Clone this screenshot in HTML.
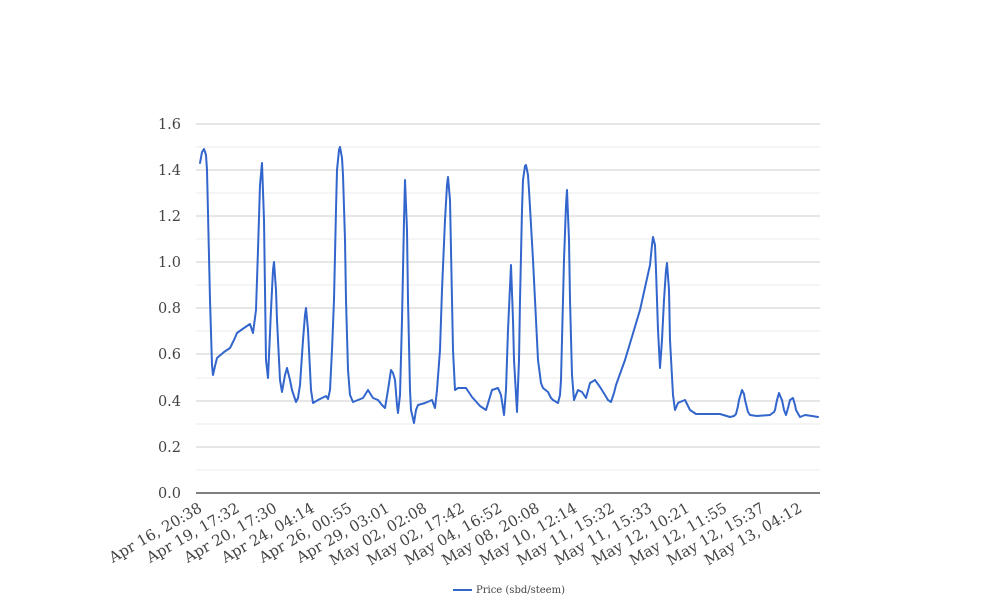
<!DOCTYPE html>
<html><head><meta charset="utf-8"><style>
html,body{margin:0;padding:0;background:#fff;width:1008px;height:616px;overflow:hidden}
svg text{font-family:"DejaVu Serif","Liberation Serif",serif;fill:#444}
</style></head><body>
<svg width="1008" height="616" viewBox="0 0 1008 616" xmlns="http://www.w3.org/2000/svg">
<g stroke="#ebebeb" stroke-width="1">
<line x1="196" y1="147" x2="820" y2="147"/><line x1="196" y1="193" x2="820" y2="193"/>
<line x1="196" y1="239" x2="820" y2="239"/><line x1="196" y1="285" x2="820" y2="285"/>
<line x1="196" y1="331" x2="820" y2="331"/><line x1="196" y1="378" x2="820" y2="378"/>
<line x1="196" y1="424" x2="820" y2="424"/><line x1="196" y1="470" x2="820" y2="470"/>
</g>
<g stroke="#cccccc" stroke-width="1">
<line x1="196" y1="124" x2="820" y2="124"/><line x1="196" y1="170" x2="820" y2="170"/>
<line x1="196" y1="216" x2="820" y2="216"/><line x1="196" y1="262" x2="820" y2="262"/>
<line x1="196" y1="308" x2="820" y2="308"/><line x1="196" y1="354" x2="820" y2="354"/>
<line x1="196" y1="401" x2="820" y2="401"/><line x1="196" y1="447" x2="820" y2="447"/>
</g>
<line x1="196" y1="493" x2="820" y2="493" stroke="#333" stroke-width="1.2"/>
<g font-size="14.5" text-anchor="end">
<text x="181" y="129">1.6</text><text x="181" y="175">1.4</text><text x="181" y="221">1.2</text>
<text x="181" y="267">1.0</text><text x="181" y="313">0.8</text><text x="181" y="359">0.6</text>
<text x="181" y="406">0.4</text><text x="181" y="452">0.2</text><text x="181" y="498">0.0</text>
</g>
<g font-size="15" text-anchor="end">
<text transform="translate(203,511) rotate(-30)">Apr 16, 20:38</text>
<text transform="translate(240.5,511) rotate(-30)">Apr 19, 17:32</text>
<text transform="translate(278,511) rotate(-30)">Apr 20, 17:30</text>
<text transform="translate(315.5,511) rotate(-30)">Apr 24, 04:14</text>
<text transform="translate(353,511) rotate(-30)">Apr 26, 00:55</text>
<text transform="translate(390.5,511) rotate(-30)">Apr 29, 03:01</text>
<text transform="translate(428,511) rotate(-30)">May 02, 02:08</text>
<text transform="translate(465.5,511) rotate(-30)">May 02, 17:42</text>
<text transform="translate(503,511) rotate(-30)">May 04, 16:52</text>
<text transform="translate(540.5,511) rotate(-30)">May 08, 20:08</text>
<text transform="translate(578,511) rotate(-30)">May 10, 12:14</text>
<text transform="translate(615.5,511) rotate(-30)">May 11, 15:32</text>
<text transform="translate(653,511) rotate(-30)">May 11, 15:33</text>
<text transform="translate(690.5,511) rotate(-30)">May 12, 10:21</text>
<text transform="translate(728,511) rotate(-30)">May 12, 11:55</text>
<text transform="translate(765.5,511) rotate(-30)">May 12, 15:37</text>
<text transform="translate(803,511) rotate(-30)">May 13, 04:12</text>
</g>
<polyline fill="none" stroke="#3366cc" stroke-width="2" stroke-linejoin="round" stroke-linecap="round" points="200,163 202,152 204,149 206,155 207,170 210,300 212,365 213,375 215,366 217,358 224,352 230,348 234,340 237,333 244,328 250,324 253,333 256,310 258,250 260,185 262,163 264,220 266,360 268,378 271,310 273,270 274,262 276,290 277,320 280,380 282,392 285,375 287,368 290,380 292,390 296,402 298,398 300,385 303,340 305,315 306,308 308,330 309,350 311,390 313,403 318,400 322,398 326,396 328,399 330,390 332,350 334,300 336,210 337,170 339,150 340,147 342,158 343,175 345,240 346,300 348,370 350,395 353,402 358,400 363,398 368,390 373,398 378,400 382,405 385,408 388,390 391,370 393,373 395,380 397,405 398,413 400,395 402,320 404,220 405,180 407,230 408,300 410,390 411,410 414,423 416,410 418,405 425,403 432,400 435,408 437,390 440,350 442,290 445,220 447,185 448,177 450,200 451,250 453,350 455,390 458,388 466,388 472,397 480,406 486,410 489,400 492,390 498,388 501,395 504,415 506,390 508,330 511,265 513,320 514,360 517,412 519,360 520,300 522,210 523,180 525,166 526,165 528,175 529,190 533,260 536,320 538,360 541,383 543,388 548,392 551,398 553,400 558,403 560,395 561,380 563,300 564,260 566,205 567,190 569,240 570,300 572,375 574,400 576,395 578,390 582,392 586,398 590,383 595,380 600,387 605,395 608,400 611,402 614,393 616,385 625,360 640,310 650,265 652,245 653,237 655,245 656,270 658,330 660,368 662,340 664,300 666,270 667,263 669,290 670,340 673,395 675,410 678,403 680,402 685,400 688,406 690,410 696,414 720,414 730,417 734,416 736,414 738,406 739,400 742,390 744,394 745,400 748,412 750,415 757,416 770,415 774,412 775,410 777,400 779,393 781,398 782,400 784,410 786,415 788,408 790,400 793,398 795,405 796,410 800,417 805,415 812,416 818,417"/>
<line x1="453" y1="590" x2="472" y2="590" stroke="#3366cc" stroke-width="2"/>
<text x="476" y="593" font-size="10" fill="#333">Price (sbd/steem)</text>
</svg>
</body></html>
